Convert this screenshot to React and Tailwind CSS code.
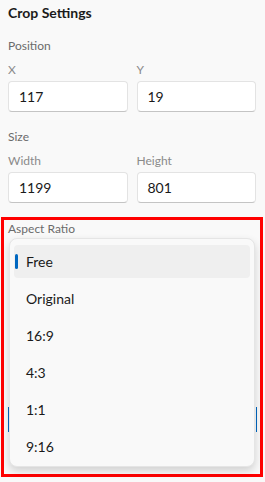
import React from "react";

const font = { fontFamily: "Lato, 'Noto Sans', sans-serif" };

const Field = ({ label, value }) => (
  <div className="flex-1">
    <div className="text-[12px] leading-4 text-[#8a8a8a]">{label}</div>
    <div className="mt-[3px] h-[31px] rounded-[4px] border border-[#e3e3e3] border-b-[#c4c4c4] bg-white px-[10px] flex items-center text-[14px] text-[#1a1a1a]">
      {value}
    </div>
  </div>
);

const options = ["Free", "Original", "16:9", "4:3", "1:1", "9:16"];

export default function App() {
  return (
    <div className="w-[265px] h-[482px] bg-[#f9f9f9] overflow-hidden px-2" style={font}>
      <h2 className="mt-[3px] text-[14px] leading-5 font-bold text-[#1b1b1b]">Crop Settings</h2>

      <div className="mt-[15px] text-[12px] leading-4 text-[#6b6b6b]">Position</div>
      <div className="mt-2 flex gap-[9px] pr-[1px]">
        <Field label="X" value="117" />
        <Field label="Y" value="19" />
      </div>

      <div className="mt-[17px] text-[12px] leading-4 text-[#6b6b6b]">Size</div>
      <div className="mt-2 flex gap-[9px] pr-[1px]">
        <Field label="Width" value="1199" />
        <Field label="Height" value="801" />
      </div>

      {/* highlighted aspect ratio block */}
      <div className="relative mt-[14px] -ml-[7px] w-[262px] h-[260px] border-[3px] border-[#ff0000] bg-[#f9f9f9]">
        <div className="pl-1 pt-[1px] text-[12px] leading-4 text-[#6b6b6b]">Aspect Ratio</div>
        <div className="ml-1 mt-[170px] w-[249px] h-[25px] border-x border-[#0067c0]"></div>

        <div className="absolute left-[5px] top-[18px] w-[246px] h-[229px] rounded-[8px] border border-[#e5e5e5] bg-[#f9f9f9] shadow-[0_4px_8px_rgba(0,0,0,0.16)] px-[4px] pt-[4px]">
          {options.map((o, i) => (
            <div key={o} className="py-[2px]">
              <div
                className={
                  "relative h-[33px] rounded-[4px] flex items-center pl-[12px] text-[14px] text-[#1a1a1a] " +
                  (i === 0 ? "bg-[#efefef]" : "")
                }
              >
                {i === 0 && (
                  <span className="absolute left-[1px] top-[9px] w-[3px] h-[15px] rounded-full bg-[#0067c0]"></span>
                )}
                {o}
              </div>
            </div>
          ))}
        </div>
      </div>
    </div>
  );
}
